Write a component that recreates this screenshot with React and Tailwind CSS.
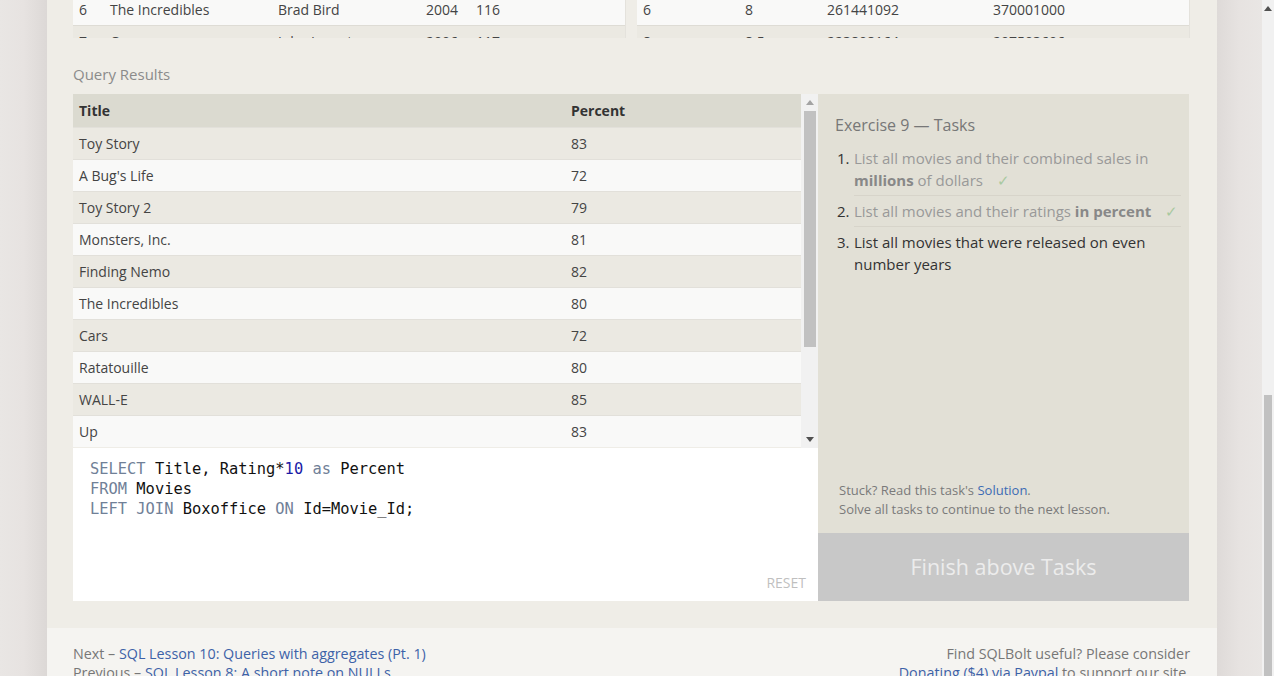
import React from 'react';

const moviesTop = [
  { id: 6, title: 'The Incredibles', director: 'Brad Bird', year: 2004, mins: 116 },
  { id: 7, title: 'Cars', director: 'John Lasseter', year: 2006, mins: 117 },
];

const boxTop = [
  { id: 6, rating: 8, domestic: 261441092, intl: 370001000 },
  { id: 8, rating: 8.5, domestic: 223808164, intl: 297503696 },
];

const results = [
  ['Toy Story', 83],
  ["A Bug's Life", 72],
  ['Toy Story 2', 79],
  ['Monsters, Inc.', 81],
  ['Finding Nemo', 82],
  ['The Incredibles', 80],
  ['Cars', 72],
  ['Ratatouille', 80],
  ['WALL-E', 85],
  ['Up', 83],
];

function UpArrow({ className }) {
  return (
    <svg width="8" height="5" viewBox="0 0 8 5" className={className}>
      <path d="M0 5 L4 0 L8 5 Z" fill="currentColor" />
    </svg>
  );
}

function DownArrow({ className }) {
  return (
    <svg width="8" height="5" viewBox="0 0 8 5" className={className}>
      <path d="M0 0 L8 0 L4 5 Z" fill="currentColor" />
    </svg>
  );
}

function Check() {
  return <span className="ml-[14px] text-[#a9c9a0]">✓</span>;
}

export default function App() {
  return (
    <div className="h-[676px] overflow-hidden flex bg-[#e8e4e2] font-['Open_Sans',sans-serif] text-[#444]">
      {/* left gutter */}
      <div className="w-[47px] shrink-0 bg-gradient-to-r from-[#e9e6e4] via-[#e7e3e1] to-[#dcd8d6]" />

      {/* page column */}
      <div className="w-[1170px] shrink-0 flex flex-col">
        <div className="bg-[#efede7] px-[26px] pb-[27px]">
          {/* tables from the lesson above, scrolled */}
          <div className="flex gap-[11px] h-[38px]">
            <div className="w-[553px] overflow-hidden border-r border-[#e4e2dc]">
              <div className="-mt-[6px]">
                {moviesTop.map((m, i) => (
                  <div
                    key={m.id}
                    className={`flex items-center h-[32px] text-[14px] border-b border-[#dedcd5] ${i === 0 ? 'bg-[#f9f9f8]' : 'bg-[#ebe9e2]'}`}
                  >
                    <span className="w-[37px] pl-[6px]">{m.id}</span>
                    <span className="w-[168px]">{m.title}</span>
                    <span className="w-[148px]">{m.director}</span>
                    <span className="w-[50px]">{m.year}</span>
                    <span>{m.mins}</span>
                  </div>
                ))}
              </div>
            </div>
            <div className="w-[553px] overflow-hidden border-r border-[#e4e2dc]">
              <div className="-mt-[6px]">
                {boxTop.map((b, i) => (
                  <div
                    key={b.id}
                    className={`flex items-center h-[32px] text-[14px] border-b border-[#dedcd5] ${i === 0 ? 'bg-[#f9f9f8]' : 'bg-[#ebe9e2]'}`}
                  >
                    <span className="w-[108px] pl-[6px]">{b.id}</span>
                    <span className="w-[82px]">{b.rating}</span>
                    <span className="w-[166px]">{b.domestic}</span>
                    <span>{b.intl}</span>
                  </div>
                ))}
              </div>
            </div>
          </div>

          <div className="mt-[25px] h-[31px] text-[15px] leading-[22px] text-[#8b8b8b]">Query Results</div>

          <div className="flex">
            {/* results + editor */}
            <div className="w-[745px] flex flex-col">
              <div className="h-[354px] flex">
                <div className="flex-1 text-[14px]">
                  <div className="flex items-center h-[33px] bg-[#dbdad0] font-bold text-[#333] pl-[6px]">
                    <span className="w-[492px]">Title</span>
                    <span>Percent</span>
                  </div>
                  {results.map(([t, p], i) => (
                    <div
                      key={t}
                      className={`flex items-center h-[32px] pl-[6px] border-t border-[#e2e0da] ${i % 2 === 0 ? 'bg-[#ebe9e2]' : 'bg-[#f9f9f8]'}`}
                    >
                      <span className="w-[492px]">{t}</span>
                      <span>{p}</span>
                    </div>
                  ))}
                </div>
                {/* inner scrollbar */}
                <div className="w-[17px] bg-[#f1f1f1] flex flex-col items-center">
                  <div className="h-[17px] flex items-center justify-center">
                    <UpArrow className="text-[#a3a3a3]" />
                  </div>
                  <div className="w-[12px] h-[236px] bg-[#c1c1c1]" />
                  <div className="flex-1" />
                  <div className="h-[17px] flex items-center justify-center">
                    <DownArrow className="text-[#505050]" />
                  </div>
                </div>
              </div>

              <div className="h-[153px] bg-white flex flex-col px-[17px] pt-[11px] pb-[8px]">
                <pre className="font-['DejaVu_Sans_Mono',monospace] text-[15.4px] leading-[20px] text-[#111]">
                  <span className="text-[#708097]">SELECT</span> Title, Rating*<span className="text-[#1a1aa6]">10</span>{' '}
                  <span className="text-[#708097]">as</span> Percent{'\n'}
                  <span className="text-[#708097]">FROM</span> Movies{'\n'}
                  <span className="text-[#708097]">LEFT JOIN</span> Boxoffice <span className="text-[#708097]">ON</span> Id=Movie_Id;
                </pre>
                <div className="flex-1" />
                <div className="text-right text-[14px] leading-[20px] text-[#bfbfbf] mr-[-5px]">RESET</div>
              </div>
            </div>

            {/* tasks panel */}
            <div className="w-[371px] flex flex-col">
              <div className="h-[439px] bg-[#e2e0d6] flex flex-col pl-[17px] pr-[8px] pt-[18px] pb-[14px]">
                <div className="text-[16px] leading-[26px] text-[#777]">Exercise 9 — Tasks</div>
                <ol className="mt-[5px] text-[15px] leading-[22px]">
                  <li className="flex">
                    <span className="w-[19px] pl-[2px] pt-[4px] text-[#333]">1.</span>
                    <div className="flex-1 py-[4px] border-b border-[#d7d4ca] text-[#999]">
                      List all movies and their combined sales in <b className="text-[#888]">millions</b> of dollars
                      <Check />
                    </div>
                  </li>
                  <li className="flex">
                    <span className="w-[19px] pl-[2px] pt-[4px] text-[#333]">2.</span>
                    <div className="flex-1 py-[4px] border-b border-[#d7d4ca] text-[#999]">
                      List all movies and their ratings <b className="text-[#888]">in percent</b>
                      <Check />
                    </div>
                  </li>
                  <li className="flex">
                    <span className="w-[19px] pl-[2px] pt-[4px] text-[#333]">3.</span>
                    <div className="flex-1 py-[4px] text-[#333]">
                      List all movies that were released on even number years
                    </div>
                  </li>
                </ol>
                <div className="flex-1" />
                <div className="pl-[4px] text-[13px] leading-[19px] text-[#7a7a7a]">
                  <div>
                    Stuck? Read this task's <span className="text-[#3c6bb4]">Solution</span>.
                  </div>
                  <div>Solve all tasks to continue to the next lesson.</div>
                </div>
              </div>
              <div className="h-[68px] bg-[#c8c8c8] flex items-center justify-center text-[21.5px] text-[#ececec]">
                Finish above Tasks
              </div>
            </div>
          </div>
        </div>

        {/* footer */}
        <div className="flex-1 bg-[#f5f4f1] px-[26px] pt-[16px] flex justify-between text-[14.3px] leading-[19px] text-[#777]">
          <div>
            <div>
              Next – <span className="text-[#3d62a8]">SQL Lesson 10: Queries with aggregates (Pt. 1)</span>
            </div>
            <div>
              Previous – <span className="text-[#3d62a8]">SQL Lesson 8: A short note on NULLs</span>
            </div>
          </div>
          <div className="text-right pr-[1px]">
            <div>Find SQLBolt useful? Please consider</div>
            <div>
              <span className="text-[#3d62a8]">Donating ($4) via Paypal</span> to support our site.
            </div>
          </div>
        </div>
      </div>

      {/* right gutter */}
      <div className="flex-1 bg-gradient-to-r from-[#dedad8] via-[#e7e3e1] to-[#e9e6e4]" />

      {/* page scrollbar */}
      <div className="w-[12px] shrink-0 bg-[#f1f1f1] flex flex-col items-center">
        <div className="h-[16px] flex items-center justify-center">
          <UpArrow className="text-[#505050]" />
        </div>
        <div className="mt-[379px] w-[8px] flex-1 bg-[#c1c1c1]" />
      </div>
    </div>
  );
}
